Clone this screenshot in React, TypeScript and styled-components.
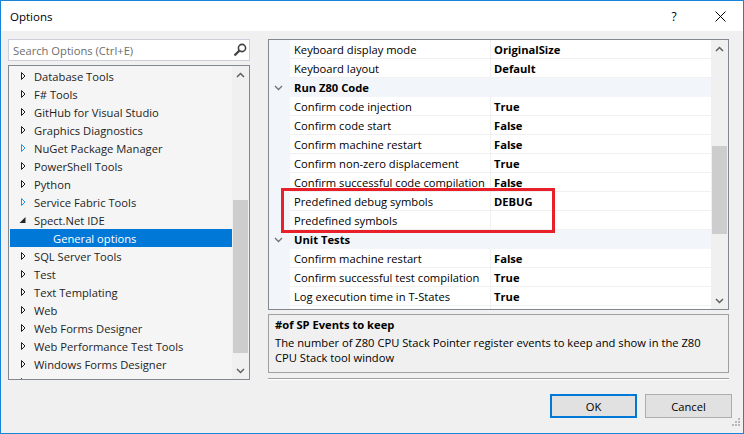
import React from "react";
import styled, { createGlobalStyle } from "styled-components";

const Global = createGlobalStyle`
  html, body { margin: 0; padding: 0; background: #f0f0f0; }
  body { font-family: "Open Sans", "Noto Sans", sans-serif; font-size: 11.2px; color: #000; }
  * { box-sizing: border-box; }
`;

const Window = styled.div`
  position: relative;
  width: 744px;
  height: 434px;
  border: 1px solid #1883d7;
  background: #f0f0f0;
  display: flex;
  flex-direction: column;
  overflow: hidden;
`;

const TitleBar = styled.div`
  height: 30px;
  background: #fff;
  display: flex;
  align-items: center;
  padding-left: 9px;
`;

const TitleText = styled.div`
  flex: 1;
  font-size: 11.5px;
  color: #000;
`;

const TitleButton = styled.div`
  width: 46px;
  height: 30px;
  display: flex;
  align-items: center;
  justify-content: center;
  font-size: 12px;
  color: #000;
`;

const Body = styled.div`
  flex: 1;
  display: flex;
  flex-direction: column;
  padding: 8px 11px 0 7px;
`;

const Main = styled.div`
  display: grid;
  grid-template-columns: 242px 461px;
  column-gap: 18px;
  height: 341px;
`;

const LeftColumn = styled.div`
  display: flex;
  flex-direction: column;
  gap: 4px;
`;

const SearchBox = styled.div`
  height: 22px;
  border: 1px solid #cccedb;
  background: #fff;
  display: flex;
  align-items: center;
  padding: 0 2px 0 4px;
`;

const SearchPlaceholder = styled.span`
  flex: 1;
  color: #6d6d6d;
`;

const Tree = styled.div`
  height: 315px;
  border: 1px solid #828790;
  background: #f5f5f5;
  display: flex;
`;

const TreeList = styled.div`
  flex: 1;
  padding: 1px 0 0 1px;
  overflow: hidden;
`;

const TreeRow = styled.div<{ $selected?: boolean; $indent: number }>`
  height: 18px;
  display: flex;
  align-items: center;
  white-space: nowrap;
  padding-left: ${(p) => p.$indent}px;
  background: ${(p) => (p.$selected ? "#0078d7" : "transparent")};
  color: ${(p) => (p.$selected ? "#fff" : "#1e1e1e")};
`;

const Expander = styled.span`
  width: 15px;
  height: 18px;
  margin-left: 9px;
  display: flex;
  align-items: center;
`;

const ScrollBar = styled.div`
  width: 17px;
  display: flex;
  flex-direction: column;
  background: #f0f0f0;
`;

const ScrollArrow = styled.div`
  height: 17px;
  display: flex;
  align-items: center;
  justify-content: center;
`;

const ScrollTrack = styled.div`
  flex: 1;
  display: flex;
  flex-direction: column;
`;

const Thumb = styled.div<{ $top: number; $height: number }>`
  margin: ${(p) => p.$top}px 1px 0 1px;
  height: ${(p) => p.$height}px;
  background: #cdcdcd;
`;

const RightColumn = styled.div`
  display: flex;
  flex-direction: column;
`;

const PropertyGrid = styled.div`
  position: relative;
  height: 271px;
  border: 1px solid #828790;
  background: #fff;
  display: flex;
`;

const GridRows = styled.div`
  flex: 1;
  overflow: hidden;
`;

const PropRow = styled.div`
  display: grid;
  grid-template-columns: 21px 200px 1fr;
  height: 19px;
`;

const Gutter = styled.div`
  background: #f2f5fa;
`;

const NameCell = styled.div`
  padding: 1px 0 0 4px;
  line-height: 18px;
  border-bottom: 1px solid #f0f0f0;
  white-space: nowrap;
  overflow: hidden;
`;

const ValueCell = styled.div`
  padding: 1px 0 0 3px;
  line-height: 18px;
  font-weight: 700;
  border-left: 1px solid #f0f0f0;
  border-bottom: 1px solid #f0f0f0;
  white-space: nowrap;
  overflow: hidden;
`;

const CategoryRow = styled.div`
  display: grid;
  grid-template-columns: 21px 1fr;
  height: 19px;
  background: #f2f5fa;
`;

const CategoryChevron = styled.div`
  display: flex;
  align-items: center;
  justify-content: center;
  padding-right: 2px;
`;

const CategoryLabel = styled.div`
  padding: 1px 0 0 4px;
  line-height: 18px;
  font-weight: 700;
`;

const Highlight = styled.div`
  position: absolute;
  left: 12px;
  top: 148px;
  width: 274px;
  height: 45px;
  border: 3px solid #e8202a;
  pointer-events: none;
`;

const Description = styled.div`
  margin-top: 4px;
  height: 59px;
  border: 1px solid #a0a0a0;
  background: #f0f0f0;
  padding: 2px 6px 0 6px;
  line-height: 15px;
`;

const DescTitle = styled.div`
  font-weight: 700;
  margin-bottom: 3px;
`;

const Separator = styled.div`
  margin-top: 5px;
  border-top: 1px solid #a0a0a0;
  border-bottom: 1px solid #fff;
`;

const ButtonRow = styled.div`
  margin-top: 14px;
  display: flex;
  justify-content: flex-end;
  gap: 8px;
`;

const Button = styled.div<{ $default?: boolean }>`
  width: 87px;
  height: 24px;
  background: #e1e1e1;
  border: ${(p) => (p.$default ? "2px solid #0078d7" : "1px solid #adadad")};
  display: flex;
  align-items: center;
  justify-content: center;
  color: #000;
`;

const Grip = styled.svg`
  position: absolute;
  right: 2px;
  bottom: 4px;
`;

const Chevron = ({ up }: { up?: boolean }) => (
  <svg width="9" height="6" viewBox="0 0 9 6">
    <polyline
      points={up ? "1,5 4.5,1.5 8,5" : "1,1 4.5,4.5 8,1"}
      fill="none"
      stroke="#606060"
      strokeWidth="1.5"
    />
  </svg>
);

const CatChevron = () => (
  <svg width="9" height="6" viewBox="0 0 9 6">
    <polyline points="1,1 4.5,4.5 8,1" fill="none" stroke="#717171" strokeWidth="1.3" />
  </svg>
);

const Collapsed = ({ color }: { color: string }) => (
  <svg width="7" height="10" viewBox="0 0 7 10">
    <path d="M2.5 1.5 L6 5 L2.5 8.5 Z" fill="none" stroke={color} strokeWidth="1" />
  </svg>
);

const Expanded = () => (
  <svg width="7" height="10" viewBox="0 0 7 10">
    <path d="M0.5 8 L6.5 8 L6.5 2 Z" fill="#262626" />
  </svg>
);

const SearchIcon = () => (
  <svg width="14" height="14" viewBox="0 0 14 14">
    <circle cx="9" cy="5" r="3.6" fill="none" stroke="#424242" strokeWidth="1.6" />
    <line x1="6.4" y1="7.6" x2="1.5" y2="12.5" stroke="#424242" strokeWidth="2.2" />
  </svg>
);

const CloseIcon = () => (
  <svg width="11" height="11" viewBox="0 0 11 11">
    <line x1="0.5" y1="0.5" x2="10.5" y2="10.5" stroke="#000" strokeWidth="1" />
    <line x1="10.5" y1="0.5" x2="0.5" y2="10.5" stroke="#000" strokeWidth="1" />
  </svg>
);

type TreeItem = { label: string; state?: "collapsed" | "expanded" | "child"; blue?: boolean; selected?: boolean };

const treeItems: TreeItem[] = [
  { label: "Database Tools" },
  { label: "F# Tools" },
  { label: "GitHub for Visual Studio" },
  { label: "Graphics Diagnostics" },
  { label: "NuGet Package Manager", blue: true },
  { label: "PowerShell Tools" },
  { label: "Python" },
  { label: "Service Fabric Tools", blue: true },
  { label: "Spect.Net IDE", state: "expanded" },
  { label: "General options", state: "child", selected: true },
  { label: "SQL Server Tools" },
  { label: "Test" },
  { label: "Text Templating" },
  { label: "Web" },
  { label: "Web Forms Designer" },
  { label: "Web Performance Test Tools" },
  { label: "Windows Forms Designer" },
  { label: "Work Items" },
];

type GridItem = { category: string } | { name: string; value: string };

const gridItems: GridItem[] = [
  { name: "Keyboard display mode", value: "OriginalSize" },
  { name: "Keyboard layout", value: "Default" },
  { category: "Run Z80 Code" },
  { name: "Confirm code injection", value: "True" },
  { name: "Confirm code start", value: "False" },
  { name: "Confirm machine restart", value: "False" },
  { name: "Confirm non-zero displacement", value: "True" },
  { name: "Confirm successful code compilation", value: "False" },
  { name: "Predefined debug symbols", value: "DEBUG" },
  { name: "Predefined symbols", value: "" },
  { category: "Unit Tests" },
  { name: "Confirm machine restart", value: "False" },
  { name: "Confirm successful test compilation", value: "True" },
  { name: "Log execution time in T-States", value: "True" },
  { name: "", value: "" },
];

export default function App() {
  return (
    <>
      <Global />
      <Window>
        <TitleBar>
          <TitleText>Options</TitleText>
          <TitleButton>?</TitleButton>
          <TitleButton>
            <CloseIcon />
          </TitleButton>
        </TitleBar>
        <Body>
          <Main>
            <LeftColumn>
              <SearchBox>
                <SearchPlaceholder>Search Options (Ctrl+E)</SearchPlaceholder>
                <SearchIcon />
              </SearchBox>
              <Tree>
                <TreeList>
                  {treeItems.map((it, i) =>
                    it.state === "child" ? (
                      <TreeRow key={i} $indent={43} $selected={it.selected}>
                        {it.label}
                      </TreeRow>
                    ) : (
                      <TreeRow key={i} $indent={0} $selected={it.selected}>
                        <Expander>
                          {it.state === "expanded" ? (
                            <Expanded />
                          ) : (
                            <Collapsed color={it.blue ? "#1c97ea" : "#1e1e1e"} />
                          )}
                        </Expander>
                        {it.label}
                      </TreeRow>
                    )
                  )}
                </TreeList>
                <ScrollBar>
                  <ScrollArrow>
                    <Chevron up />
                  </ScrollArrow>
                  <ScrollTrack>
                    <Thumb $top={117} $height={153} />
                  </ScrollTrack>
                  <ScrollArrow>
                    <Chevron />
                  </ScrollArrow>
                </ScrollBar>
              </Tree>
            </LeftColumn>
            <RightColumn>
              <PropertyGrid>
                <GridRows>
                  {gridItems.map((it, i) =>
                    "category" in it ? (
                      <CategoryRow key={i}>
                        <CategoryChevron>
                          <CatChevron />
                        </CategoryChevron>
                        <CategoryLabel>{it.category}</CategoryLabel>
                      </CategoryRow>
                    ) : (
                      <PropRow key={i}>
                        <Gutter />
                        <NameCell>{it.name}</NameCell>
                        <ValueCell>{it.value}</ValueCell>
                      </PropRow>
                    )
                  )}
                </GridRows>
                <ScrollBar>
                  <ScrollArrow>
                    <Chevron up />
                  </ScrollArrow>
                  <ScrollTrack>
                    <Thumb $top={89} $height={88} />
                  </ScrollTrack>
                  <ScrollArrow>
                    <Chevron />
                  </ScrollArrow>
                </ScrollBar>
                <Highlight />
              </PropertyGrid>
              <Description>
                <DescTitle>#of SP Events to keep</DescTitle>
                <div>
                  The number of Z80 CPU Stack Pointer register events to keep and show in the Z80
                  <br />
                  CPU Stack tool window
                </div>
              </Description>
              <Separator />
            </RightColumn>
          </Main>
          <ButtonRow>
            <Button $default>OK</Button>
            <Button>Cancel</Button>
          </ButtonRow>
        </Body>
        <Grip width="12" height="12" viewBox="0 0 12 12">
          <rect x="9" y="1" width="2" height="2" fill="#b8b8b8" />
          <rect x="6" y="4" width="2" height="2" fill="#b8b8b8" />
          <rect x="9" y="4" width="2" height="2" fill="#b8b8b8" />
          <rect x="3" y="7" width="2" height="2" fill="#b8b8b8" />
          <rect x="6" y="7" width="2" height="2" fill="#b8b8b8" />
          <rect x="9" y="7" width="2" height="2" fill="#b8b8b8" />
        </Grip>
      </Window>
    </>
  );
}
